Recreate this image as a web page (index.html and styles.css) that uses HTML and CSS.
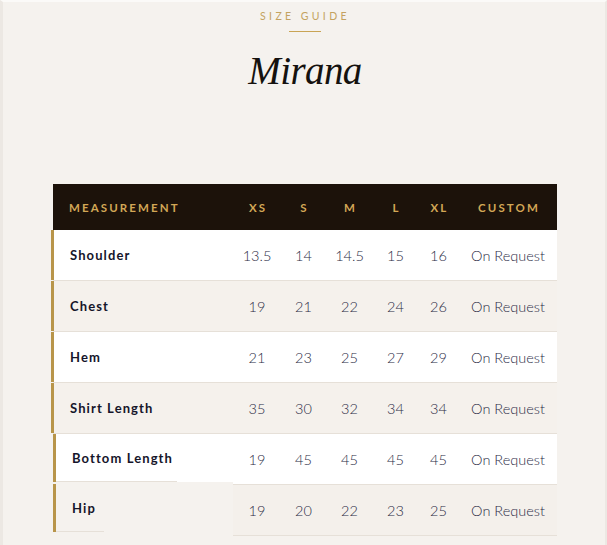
FILE: index.html
```html
<!DOCTYPE html>
<html lang="en">
<head>
<meta charset="utf-8">
<title>Size Guide — Mirana</title>
<link rel="stylesheet" href="styles.css">
</head>
<body>
<div class="page">
  <header class="intro">
    <p class="eyebrow">SIZE GUIDE</p>
    <span class="rule"></span>
    <h1 class="title">Mirana</h1>
  </header>

  <div class="chart">
    <div class="row head">
      <div class="cell label">MEASUREMENT</div>
      <div class="cell">XS</div>
      <div class="cell">S</div>
      <div class="cell">M</div>
      <div class="cell">L</div>
      <div class="cell">XL</div>
      <div class="cell">CUSTOM</div>
    </div>
    <div class="row light">
      <div class="cell label">Shoulder</div>
      <div class="cell">13.5</div><div class="cell">14</div><div class="cell">14.5</div><div class="cell">15</div><div class="cell">16</div><div class="cell">On Request</div>
    </div>
    <div class="row tint">
      <div class="cell label">Chest</div>
      <div class="cell">19</div><div class="cell">21</div><div class="cell">22</div><div class="cell">24</div><div class="cell">26</div><div class="cell">On Request</div>
    </div>
    <div class="row light">
      <div class="cell label">Hem</div>
      <div class="cell">21</div><div class="cell">23</div><div class="cell">25</div><div class="cell">27</div><div class="cell">29</div><div class="cell">On Request</div>
    </div>
    <div class="row tint">
      <div class="cell label">Shirt Length</div>
      <div class="cell">35</div><div class="cell">30</div><div class="cell">32</div><div class="cell">34</div><div class="cell">34</div><div class="cell">On Request</div>
    </div>
    <div class="row drift light five">
      <div class="cell label">Bottom Length</div>
      <div class="cell">19</div><div class="cell">45</div><div class="cell">45</div><div class="cell">45</div><div class="cell">45</div><div class="cell">On Request</div>
    </div>
    <div class="row drift tint six">
      <div class="cell label">Hip</div>
      <div class="cell">19</div><div class="cell">20</div><div class="cell">22</div><div class="cell">23</div><div class="cell">25</div><div class="cell">On Request</div>
    </div>
  </div>
</div>
</body>
</html>
```

FILE: styles.css
```css
html, body {
  margin: 0;
  padding: 0;
  background: #f5f2ee;
}

body {
  width: 607px;
  height: 545px;
  overflow: hidden;
}

.page {
  box-sizing: border-box;
  width: 607px;
  height: 545px;
  border-left: 3px solid #ece8e3;
  border-right: 2px solid #ece8e3;
  border-top: 2px solid #fbfaf8;
  font-family: Lato, "Open Sans", sans-serif;
}

.intro {
  display: flex;
  flex-direction: column;
  align-items: center;
  padding-top: 8px;
  padding-left: 2px;
}

.eyebrow {
  margin: 0;
  font-size: 10.5px;
  letter-spacing: 3.4px;
  line-height: 12px;
  color: #c4a260;
}

.rule {
  display: block;
  width: 32px;
  height: 1px;
  background: #c9a454;
  margin-top: 9px;
}

.title {
  margin: 17px 0 0;
  font-family: "Liberation Serif", "Times New Roman", serif;
  font-style: italic;
  font-weight: 400;
  font-size: 39px;
  letter-spacing: -0.6px;
  line-height: 44px;
  color: #15120f;
}

.chart {
  width: 504px;
  margin: 91px 0 0 50px;
}

.row {
  display: grid;
  grid-template-columns: 180px 48px 45px 47px 45px 41px 98px;
  height: 51px;
  box-sizing: border-box;
  border-bottom: 1px solid #e6e0d8;
}

.cell {
  display: flex;
  align-items: center;
  justify-content: center;
  font-size: 14.5px;
  font-weight: 300;
  color: #2c2c46;
}

.cell.label {
  justify-content: flex-start;
  padding-left: 16px;
  font-size: 13px;
  font-weight: 700;
  letter-spacing: 1.1px;
  color: #15152a;
  margin-left: -2px;
  border-left: 3px solid #b8954a;
}

.row.head {
  height: 46px;
  border-bottom: none;
  background: #1c120a;
}

.row.head .cell {
  font-size: 11.5px;
  font-weight: 700;
  letter-spacing: 2.1px;
  color: #d2a756;
  padding-left: 2px;
}

.row.head .cell.label {
  margin-left: 0;
  border-left: none;
  padding-left: 16px;
}

.row.light { background: #ffffff; }
.row.tint { background: #f5f1ec; }

/* rows caught mid-slide: cells drawn separately */
.row.drift {
  background: transparent;
  border-bottom: none;
}

.row.drift .cell {
  border-bottom: 1px solid #e6e0d8;
}

.row.drift.light .cell { background: #ffffff; }
.row.drift.tint .cell { background: #f4f0eb; }

.row.drift .cell.label {
  margin-left: 0;
  align-self: start;
  border-bottom: none;
  height: 48px;
  box-sizing: border-box;
}

.row.five .cell.label {
  background:
    linear-gradient(#e6e0d8, #e6e0d8) 0 100% / 121px 1px no-repeat,
    #ffffff;
}

.row.six .cell.label {
  margin-top: -1px;
  background:
    linear-gradient(#e6e0d8, #e6e0d8) 0 100% / 48px 1px no-repeat,
    #f5f2ee;
}
```
